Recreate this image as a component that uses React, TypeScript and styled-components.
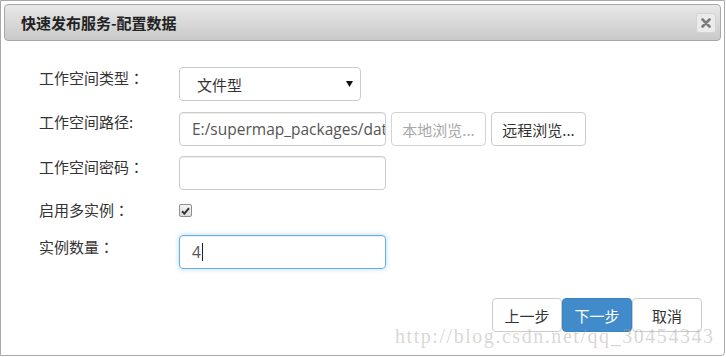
import React from "react";
import styled, { createGlobalStyle } from "styled-components";

const GlobalStyle = createGlobalStyle`
  html, body { margin: 0; padding: 0; background: #fff; }
  body { font-family: "Noto Sans", "Noto Sans CJK SC", sans-serif; }
  * { box-sizing: border-box; }
`;

const Dialog = styled.div`
  position: relative;
  width: 725px;
  height: 356px;
  border: 1px solid #a9a9a9;
  border-radius: 0 0 4px 0;
  padding: 3px;
  display: flex;
  flex-direction: column;
  background: #fff;
`;

const TitleBar = styled.div`
  height: 37px;
  border: 1px solid #a8a8a8;
  border-radius: 4px;
  background: linear-gradient(#e8e8e8, #c9c9c9);
  display: flex;
  align-items: center;
  justify-content: space-between;
  padding: 0 4px 0 16px;
`;

const Title = styled.div`
  font-family: "Noto Sans CJK SC", sans-serif;
  font-weight: 700;
  font-size: 15px;
  color: #222;
`;

const CloseBtn = styled.div`
  width: 20px;
  height: 20px;
  border: 1px solid #d4d4d4;
  border-radius: 3px;
  background: #ebebeb;
  display: flex;
  align-items: center;
  justify-content: center;
`;

const Form = styled.div`
  padding: 26px 0 0 35px;
  display: flex;
  flex-direction: column;
`;

const Row = styled.div<{ $mt: number }>`
  display: flex;
  align-items: flex-start;
  margin-top: ${(p) => p.$mt}px;
`;

const Label = styled.div<{ $pt?: number }>`
  width: 140px;
  flex: none;
  font-family: "Noto Sans CJK SC", sans-serif;
  font-size: 15px;
  line-height: 20px;
  color: #333;
  padding-top: ${(p) => p.$pt ?? 1}px;
`;

const Colon = styled.span`
  font-family: "Noto Sans CJK JP", sans-serif;
`;

const Controls = styled.div`
  display: flex;
  gap: 5px;
`;

const Select = styled.div`
  width: 182px;
  height: 34px;
  border: 1px solid #ccc;
  border-radius: 4px;
  display: flex;
  align-items: center;
  justify-content: space-between;
  padding: 0 7px 0 17px;
  font-family: "Noto Sans CJK SC", sans-serif;
  font-size: 15px;
  color: #333;
`;

const Input = styled.div<{ $focus?: boolean }>`
  width: 207px;
  height: 34px;
  border: 1px solid ${(p) => (p.$focus ? "#66afe9" : "#ccc")};
  border-radius: 4px;
  box-shadow: ${(p) =>
    p.$focus
      ? "inset 0 1px 1px rgba(0,0,0,.075), 0 0 5px rgba(102,175,233,.5)"
      : "inset 0 1px 1px rgba(0,0,0,.075)"};
  display: flex;
  align-items: center;
  padding: 0 12px;
  font-family: "Open Sans", "Noto Sans", sans-serif;
  font-size: 15.5px;
  color: #555;
  white-space: nowrap;
  overflow: hidden;
`;

const Caret = styled.span`
  display: inline-block;
  width: 1px;
  height: 18px;
  background: #222;
  margin-left: 1px;
`;

const Button = styled.div<{ $disabled?: boolean; $primary?: boolean; $w?: number }>`
  width: ${(p) => p.$w ?? 95}px;
  height: 34px;
  border: 1px solid ${(p) => (p.$primary ? "#3a82c4" : "#ccc")};
  border-radius: 4px;
  background: ${(p) => (p.$primary ? "#428bca" : "#fff")};
  color: ${(p) => (p.$primary ? "#fff" : p.$disabled ? "#999" : "#333")};
  opacity: ${(p) => (p.$disabled ? 0.85 : 1)};
  display: flex;
  align-items: center;
  justify-content: center;
  font-family: "Noto Sans CJK SC", sans-serif;
  font-size: 15px;
`;

const Check = styled.div`
  width: 13px;
  height: 13px;
  margin-top: 4px;
  border: 1px solid #8f8f8f;
  border-radius: 2px;
  background: linear-gradient(#f4f4f4, #dcdcdc);
  display: flex;
  align-items: center;
  justify-content: center;
`;

const Footer = styled.div`
  margin-top: auto;
  display: flex;
  justify-content: flex-end;
  padding: 0 19px 20px 0;
`;

const Watermark = styled.div`
  position: absolute;
  left: 394px;
  top: 324px;
  font-family: "Liberation Serif", serif;
  font-size: 20px;
  letter-spacing: 1.55px;
  color: rgba(170, 165, 160, 0.45);
  pointer-events: none;
  white-space: nowrap;
`;

export default function App() {
  return (
    <>
      <GlobalStyle />
      <Dialog>
        <TitleBar>
          <Title>快速发布服务-配置数据</Title>
          <CloseBtn>
            <svg width="10" height="10" viewBox="0 0 10 10">
              <path d="M1.5 1.5 L8.5 8.5 M8.5 1.5 L1.5 8.5" stroke="#7a7a7a" strokeWidth="2.6" strokeLinecap="round" />
            </svg>
          </CloseBtn>
        </TitleBar>
        <Form>
          <Row $mt={0}>
            <Label $pt={1}>工作空间类型<Colon>：</Colon></Label>
            <Select>
              <span>文件型</span>
              <svg width="7" height="6" viewBox="0 0 7 6">
                <path d="M0 0 H7 L3.5 6 Z" fill="#111" />
              </svg>
            </Select>
          </Row>
          <Row $mt={11}>
            <Label $pt={0}>工作空间路径:</Label>
            <Controls>
              <Input>E:/supermap_packages/data</Input>
              <Button $disabled>本地浏览...</Button>
              <Button>远程浏览...</Button>
            </Controls>
          </Row>
          <Row $mt={10}>
            <Label $pt={1}>工作空间密码<Colon>：</Colon></Label>
            <Input />
          </Row>
          <Row $mt={10}>
            <Label $pt={0}>启用多实例<Colon>：</Colon></Label>
            <Check>
              <svg width="9" height="8" viewBox="0 0 9 8">
                <path d="M1 4.2 L3.4 6.6 L8 1.2" stroke="#333" strokeWidth="2" fill="none" />
              </svg>
            </Check>
          </Row>
          <Row $mt={15}>
            <Label $pt={2}>实例数量<Colon>：</Colon></Label>
            <Input $focus>
              4<Caret />
            </Input>
          </Row>
        </Form>
        <Footer>
          <Button $w={70}>上一步</Button>
          <Button $w={70} $primary>下一步</Button>
          <Button $w={70}>取消</Button>
        </Footer>
        <Watermark>http://blog.csdn.net/qq_30454343</Watermark>
      </Dialog>
    </>
  );
}
